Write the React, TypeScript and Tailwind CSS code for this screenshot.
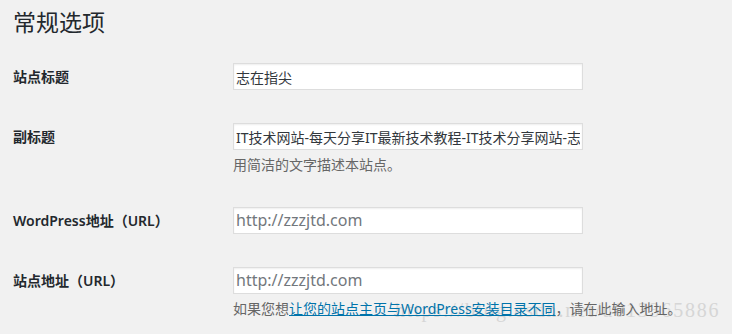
import React from "react";

const font = { fontFamily: '"Noto Sans", "Noto Sans CJK SC", sans-serif' };

function Row({
  label,
  children,
  pb = "pb-[16px]",
}: {
  label: string;
  children: React.ReactNode;
  pb?: string;
}) {
  return (
    <div className={`flex items-start pt-[17px] ${pb}`}>
      <div className="w-[220px] shrink-0 h-[27px] leading-[27px] text-[14px] font-semibold text-[#23282d]">
        {label}
      </div>
      <div className="flex flex-col">{children}</div>
    </div>
  );
}

function Field({ value, placeholder }: { value?: string; placeholder?: string }) {
  return (
    <input
      readOnly
      value={value ?? ""}
      placeholder={placeholder}
      className="w-[350px] h-[27px] bg-white border border-[#dddddd] shadow-[inset_0_1px_2px_rgba(0,0,0,0.07)] px-[2px] text-[14px] text-[#32373c] outline-none placeholder:text-[16px] placeholder:text-[#72777c]"
      style={font}
    />
  );
}

export default function App() {
  return (
    <div
      className="relative w-[732px] h-[334px] bg-[#f1f1f1] pl-[13px] overflow-hidden"
      style={font}
    >
      <div className="pt-[8px] h-[46px]">
        <h1 className="text-[23px] leading-[29px] font-normal text-[#23282d]">常规选项</h1>
      </div>

      <Row label="站点标题">
        <Field value="志在指尖" />
      </Row>

      <Row label="副标题" pb="pb-[15px]">
        <Field value="IT技术网站-每天分享IT最新技术教程-IT技术分享网站-志在指尖" />
        <p className="mt-[5px] text-[14px] leading-[20px] text-[#666666]">用简洁的文字描述本站点。</p>
      </Row>

      <Row label="WordPress地址（URL）">
        <Field placeholder="http://zzzjtd.com" />
      </Row>

      <Row label="站点地址（URL）">
        <Field placeholder="http://zzzjtd.com" />
        <p className="relative z-10 mt-[5px] whitespace-nowrap text-[14px] leading-[20px] text-[#666666]">
          如果您想
          <a className="text-[#0073aa] underline">让您的站点主页与WordPress安装目录不同</a>
          ，请在此输入地址。
        </p>
      </Row>

      <div
        className="absolute left-[395px] top-[298px] z-0 whitespace-nowrap text-[20px] leading-[24px] tracking-[1.8px] text-[#d6d6d6] pointer-events-none"
        style={{ fontFamily: '"Liberation Serif", serif' }}
      >
        https://blog.csdn.net/u013365886
      </div>
    </div>
  );
}
